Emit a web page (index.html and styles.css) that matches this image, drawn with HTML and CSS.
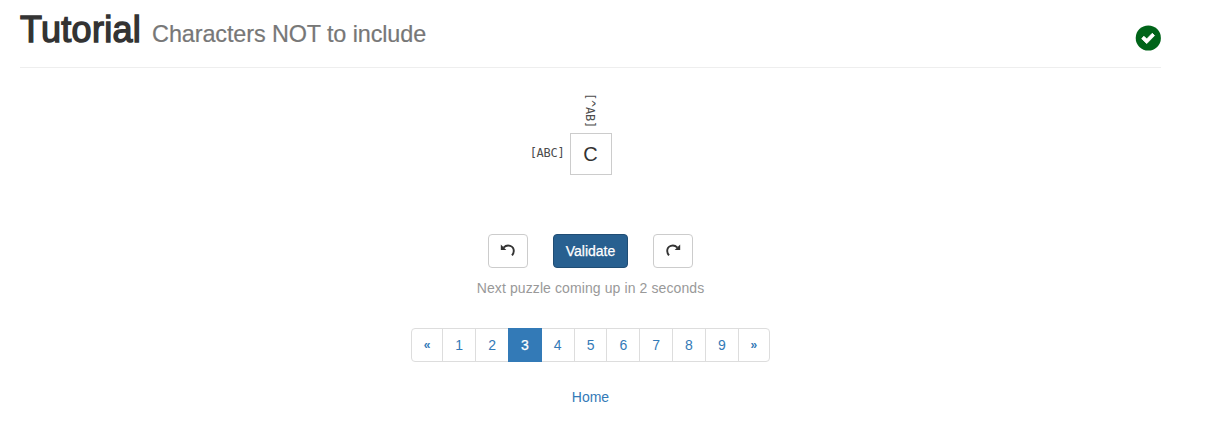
FILE: index.html
```html
<!DOCTYPE html>
<html lang="en">
<head>
<meta charset="utf-8">
<title>Tutorial</title>
<link rel="stylesheet" href="styles.css">
</head>
<body>
<main class="container">
  <header class="page-header">
    <h1 class="title"><span class="name">Tutorial</span><small class="subtitle">Characters NOT to include</small></h1>
    <svg class="status" viewBox="0 0 26 26" aria-label="Solved"><circle cx="13.3" cy="13" r="12.6" fill="#006419"/><path d="M6.7 13.6 9 11.3l2.7 2.7 5.6-5.7 2.2 2.3-7.8 8z" fill="#fff" stroke="#fff" stroke-width=".9" stroke-linejoin="round"/></svg>
  </header>
  <section class="puzzle">
    <span class="clue-col">[^AB]</span>
    <span class="clue-row">[ABC]</span>
    <span class="cell">C</span>
  </section>
  <div class="controls">
    <button class="btn" aria-label="Undo"><svg class="icon" viewBox="0 0 16 16"><path d="M3.5 4.6C7.6.8 13.8 2.8 13.8 8q-.1 2.4-1.8 4.4" fill="none" stroke="#333" stroke-width="1.9"/><path d="M.8 1.4V6.9H6.3z" fill="#333"/></svg></button>
    <button class="btn btn-primary">Validate</button>
    <button class="btn" aria-label="Redo"><svg class="icon" viewBox="0 0 16 16"><path d="M12.5 4.6C8.4.8 2.2 2.8 2.2 8q.1 2.4 1.8 4.4" fill="none" stroke="#333" stroke-width="1.9"/><path d="M15.2 1.4V6.9H9.7z" fill="#333"/></svg></button>
  </div>
  <p class="message">Next puzzle coming up in 2 seconds</p>
  <nav class="pagination">
    <a class="page page-end">«</a><a class="page">1</a><a class="page">2</a><a class="page active">3</a><a class="page">4</a><a class="page">5</a><a class="page">6</a><a class="page">7</a><a class="page">8</a><a class="page">9</a><a class="page page-end">»</a>
  </nav>
  <a class="home">Home</a>
</main>
</body>
</html>
```
FILE: styles.css
```css
* { box-sizing: border-box; }
body {
  margin: 0;
  background: #fff;
  color: #333;
  font: 14px/20px "Liberation Sans", Arial, sans-serif;
}
.container {
  width: 1141px;
  margin-left: 20px;
  display: flex;
  flex-direction: column;
  align-items: center;
}
.page-header {
  width: 100%;
  height: 68px;
  padding-top: 10px;
  border-bottom: 1px solid #eee;
  display: flex;
  justify-content: space-between;
}
.title {
  margin: 0;
  font-size: 36px;
  line-height: 40px;
  font-weight: 400;
  white-space: nowrap;
}
.name {
  letter-spacing: .3px;
  -webkit-text-stroke: 1.4px #333;
}
.subtitle {
  margin-left: 11px;
  font-size: 23.4px;
  letter-spacing: -.1px;
  color: #777;
  -webkit-text-stroke: .2px #777;
}
.status { width: 26px; height: 26px; margin-top: 15px; }
.puzzle {
  display: grid;
  grid-template-columns: 42px 42px 42px;
  grid-template-rows: 43px 42px;
  margin-top: 22px;
}
.clue-col, .clue-row {
  font: 12px/14px "DejaVu Sans Mono", monospace;
  letter-spacing: -0.25px;
  color: #4c4c4c;
}
.clue-col {
  grid-area: 1 / 2;
  writing-mode: vertical-rl;
  justify-self: center;
  align-self: end;
  padding: 0 2px 5px 0;
}
.clue-row {
  grid-area: 2 / 1;
  justify-self: end;
  align-self: center;
  padding: 0 5px 2px 0;
}
.cell {
  grid-area: 2 / 2;
  border: 1px solid #ccc;
  font-size: 20px;
  line-height: 41px;
  text-align: center;
}
.controls { display: flex; gap: 25px; margin-top: 59px; }
.btn {
  width: 40px;
  height: 34px;
  padding: 0;
  border: 1px solid #ccc;
  border-radius: 4px;
  background: #fff;
  color: #333;
  font: inherit;
  display: flex;
  align-items: center;
  justify-content: center;
}
.btn-primary {
  width: 75px;
  border-color: #204d74;
  background: #286090;
  color: #fff;
  -webkit-text-stroke: .25px #fff;
}
.icon { width: 16px; height: 16px; }
.message { margin: 10px 0 0; color: #999; letter-spacing: .1px; }
.pagination {
  display: grid;
  grid-template-columns: 30.3px repeat(9, 32.83px) 1fr;
  width: 359px;
  height: 34px;
  margin-top: 30px;
  border: 1px solid #ddd;
  border-radius: 4px;
}
.page {
  line-height: 32px;
  text-align: center;
  color: #337ab7;
}
.page + .page { border-left: 1px solid #ddd; }
.page-end { font-size: 12px; font-weight: 700; }
.page + .page.active {
  margin: -1px -1px -1px 0;
  border: 1px solid #337ab7;
  background: #337ab7;
  color: #fff;
  -webkit-text-stroke: .25px #fff;
  z-index: 1;
}
.home { margin-top: 25px; color: #337ab7; }
```
